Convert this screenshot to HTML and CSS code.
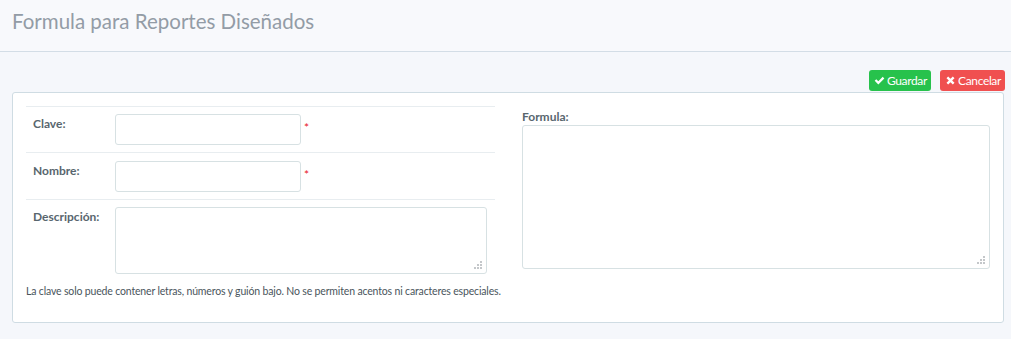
FILE: index.html
```html
<!DOCTYPE html>
<html lang="es">
<head>
  <meta charset="UTF-8">
  <meta name="viewport" content="width=device-width, initial-scale=1.0">
  <title>Formula para Reportes Diseñados</title>
  <link rel="stylesheet" href="styles.css">
</head>
<body>
  <header class="encabezado">
    <h1>Formula para Reportes Diseñados</h1>
  </header>

  <main class="contenido">
    <div class="acciones">
      <button class="btn btn-guardar">
        <svg class="icono" viewBox="0 0 16 16"><path d="M1 8.4l2.3-2.3 3 3 6.4-6.4 2.3 2.3-8.7 8.7z" fill="#fff"/></svg>Guardar
      </button>
      <button class="btn btn-cancelar">
        <svg class="icono" viewBox="0 0 16 16"><path d="M2.2 4.6l2.4-2.4 3.4 3.4 3.4-3.4 2.4 2.4-3.4 3.4 3.4 3.4-2.4 2.4-3.4-3.4-3.4 3.4-2.4-2.4 3.4-3.4z" fill="#fff"/></svg>Cancelar
      </button>
    </div>

    <section class="panel">
      <div class="columna-izq">
        <div class="fila">
          <label class="etiqueta">Clave:</label>
          <div class="campo">
            <input type="text" class="entrada">
            <span class="requerido">*</span>
          </div>
        </div>
        <div class="fila fila-media">
          <label class="etiqueta">Nombre:</label>
          <div class="campo">
            <input type="text" class="entrada">
            <span class="requerido">*</span>
          </div>
        </div>
        <div class="fila fila-ultima">
          <label class="etiqueta">Descripción:</label>
          <div class="campo campo-area">
            <textarea class="area area-desc"></textarea>
            <span class="agarre"></span>
          </div>
        </div>
        <p class="ayuda">La clave solo puede contener letras, números y guión bajo. No se permiten acentos ni caracteres especiales.</p>
      </div>

      <div class="columna-der">
        <label class="etiqueta etiqueta-formula">Formula:</label>
        <div class="campo-area">
          <textarea class="area area-formula"></textarea>
          <span class="agarre"></span>
        </div>
      </div>
    </section>
  </main>
</body>
</html>
```

FILE: styles.css
```css
body {
  margin: 0;
  padding: 0;
  background: #f5f7fb;
  font-family: Lato, 'Open Sans', sans-serif;
  color: #58666e;
}
.encabezado {
  background: #f8f9fc;
  border-bottom: 1px solid #d3dde6;
  height: 52px;
  box-sizing: border-box;
  padding: 0 12px;
}
.encabezado h1 {
  margin: 0;
  font-size: 20.5px;
  font-weight: normal;
  color: #939ca6;
  line-height: 42px;
}
.contenido {
  padding: 18px 6px 0 12px;
}
.acciones {
  display: flex;
  justify-content: flex-end;
  gap: 9px;
  margin-bottom: 1px;
}
.btn {
  display: flex;
  align-items: center;
  height: 21px;
  padding: 0 4px 0 5px;
  border: none;
  border-radius: 3px;
  color: #fff;
  font-family: inherit;
  font-size: 12px;
  letter-spacing: -0.35px;
  cursor: pointer;
}
.btn-guardar {
  background: #27c24c;
}
.btn-cancelar {
  background: #f05050;
}
.icono {
  width: 11px;
  height: 11px;
  margin-right: 2px;
}
.panel {
  display: grid;
  grid-template-columns: 469px 468px;
  column-gap: 27px;
  width: 992px;
  box-sizing: border-box;
  padding: 13px 13px 0 13px;
  height: 231px;
  background: #fff;
  border: 1px solid #cfdce3;
  border-radius: 3px;
}
.columna-izq {
  border-top: 1px solid #e8edf0;
}
.fila {
  display: flex;
  border-bottom: 1px solid #e8edf0;
  height: 46px;
  box-sizing: border-box;
  padding-top: 7px;
}
.fila-media {
  height: 47px;
  padding-top: 8px;
}
.fila-ultima {
  border-bottom: none;
  height: auto;
}
.etiqueta {
  display: block;
  width: 82px;
  padding-left: 7px;
  padding-top: 2px;
  font-size: 12px;
  font-weight: bold;
  color: #58666e;
}
.campo {
  display: flex;
  align-items: flex-start;
}
.entrada {
  width: 186px;
  height: 31px;
  box-sizing: border-box;
  margin: 0;
  border: 1px solid #d7e1e3;
  border-radius: 3px;
  background: #fff;
}
.requerido {
  color: #e8141e;
  font-size: 12px;
  margin-left: 3px;
  padding-top: 6px;
}
.campo-area {
  position: relative;
}
.area {
  display: block;
  box-sizing: border-box;
  margin: 0;
  border: 1px solid #d7e1e3;
  border-radius: 3px;
  background: #fff;
  resize: none;
}
.area-desc {
  width: 372px;
  height: 67px;
}
.area-formula {
  width: 468px;
  height: 144px;
}
.agarre {
  position: absolute;
  right: 5px;
  bottom: 5px;
  width: 2px;
  height: 2px;
  background: #c4c7ca;
  box-shadow: -3px 0 #c4c7ca, -6px 0 #c4c7ca, 0 -3px #c4c7ca, -3px -3px #c4c7ca, 0 -6px #c4c7ca;
}
.ayuda {
  margin: 11px 0 0 0;
  font-size: 10.5px;
  letter-spacing: -0.16px;
  white-space: nowrap;
  color: #4a555c;
}
.etiqueta-formula {
  width: auto;
  padding: 2px 0 1px 0;
  margin-top: 1px;
}
```
